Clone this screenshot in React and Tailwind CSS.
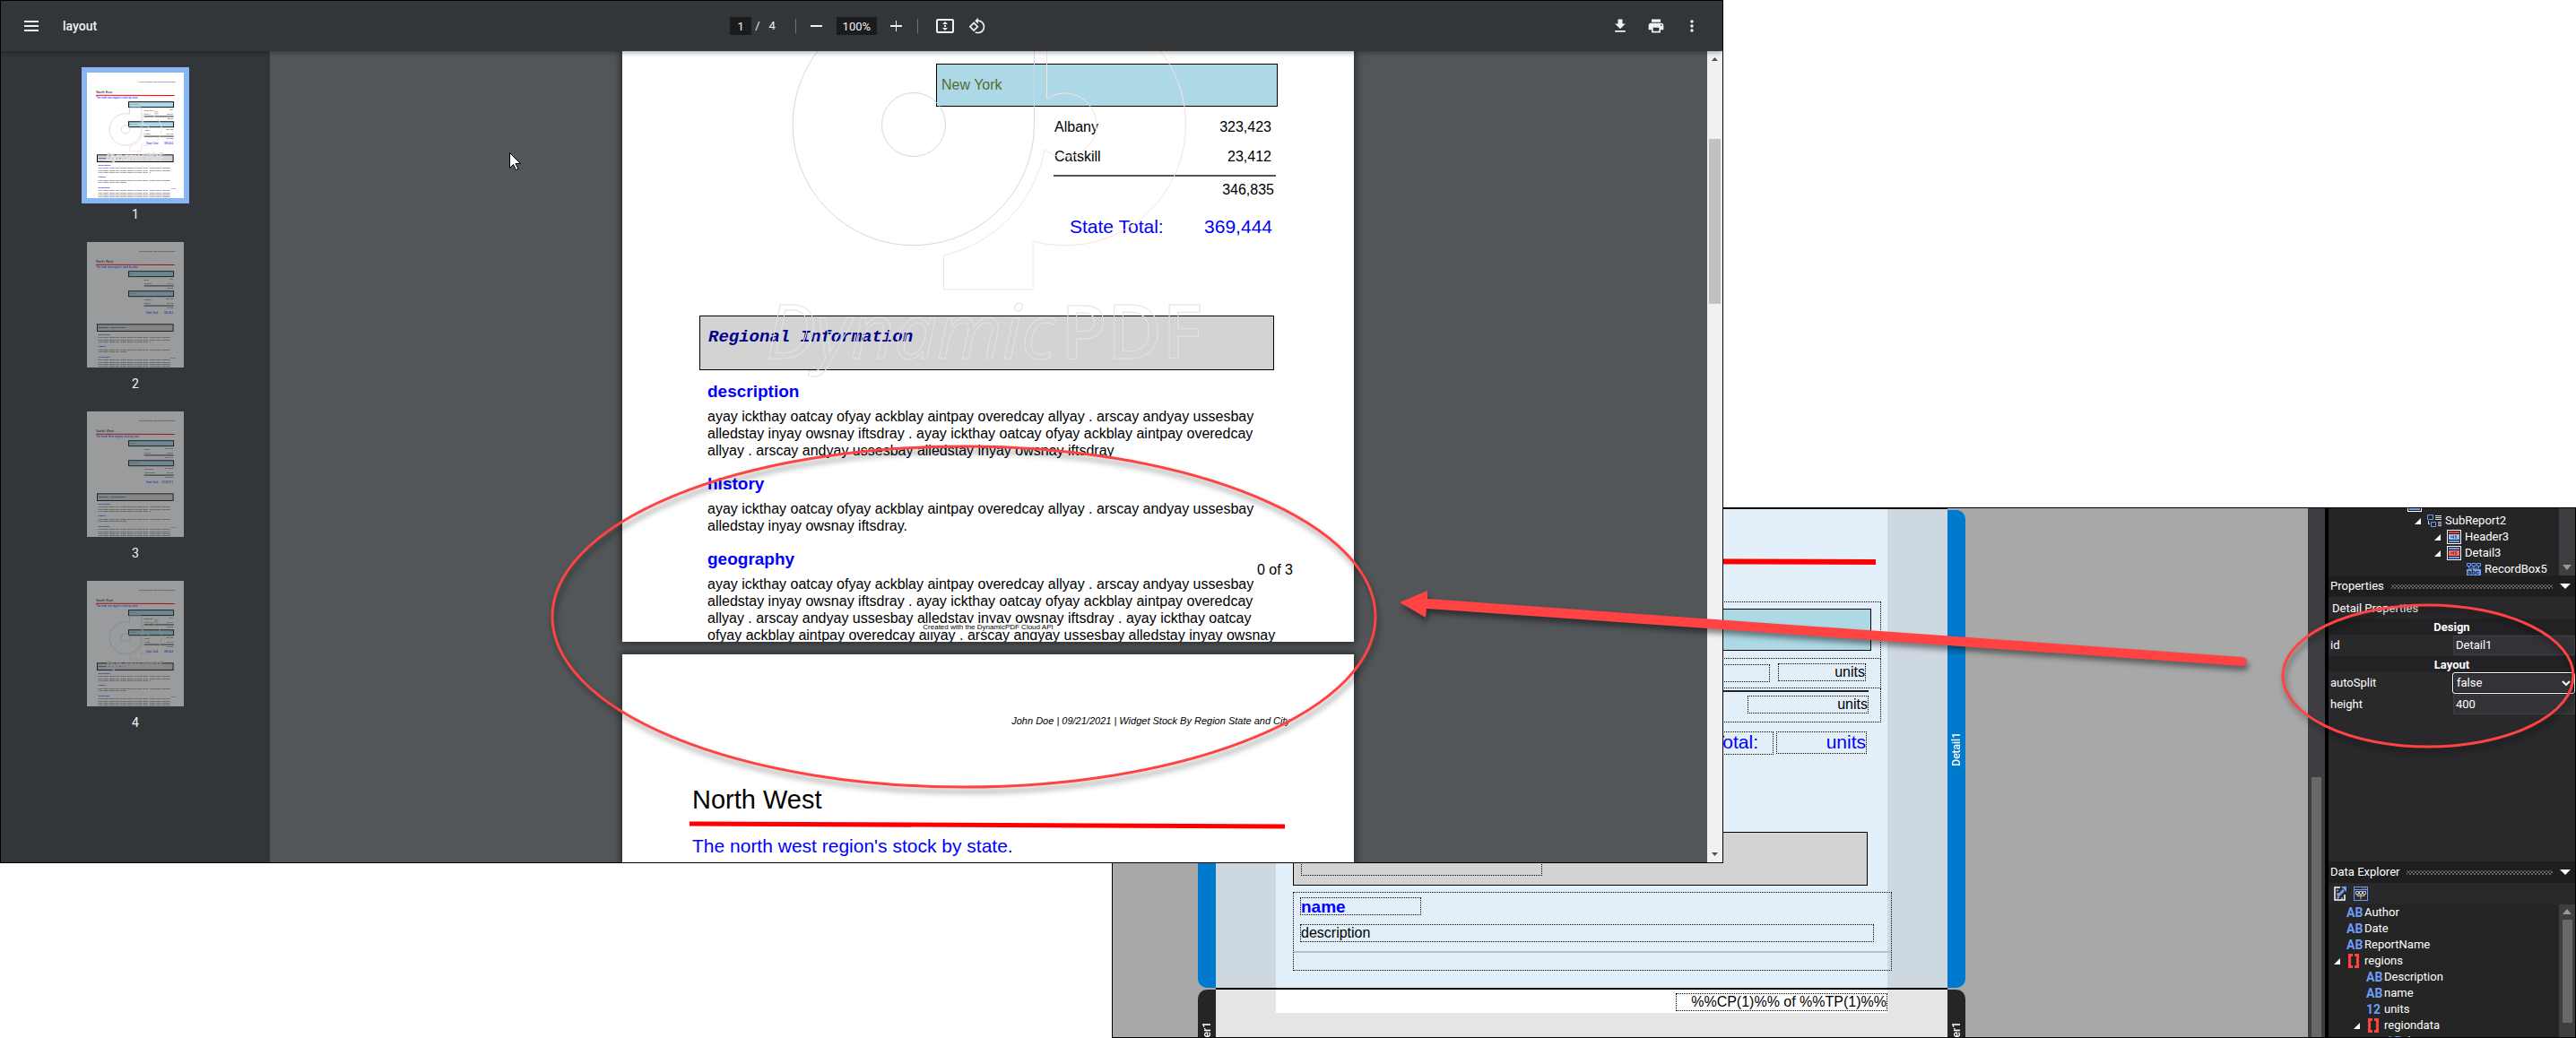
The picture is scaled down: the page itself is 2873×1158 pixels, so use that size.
import { useState } from 'react';

const SANS = "font-['Liberation_Sans',Arial,sans-serif]";
const ROBOTO = 'font-[Roboto,sans-serif]';
const MONO = "font-['Liberation_Mono',monospace]";

const LINE_A = 'ayay ickthay oatcay ofyay ackblay aintpay overedcay allyay . arscay andyay ussesbay';
const LINE_B = 'alledstay inyay owsnay iftsdray';
const SECTIONS = [
  {
    title: 'description',
    text: `${LINE_A} ${LINE_B} . ${LINE_A} ${LINE_B}`,
  },
  { title: 'history', text: `${LINE_A} ${LINE_B}.` },
  {
    title: 'geography',
    text: `${LINE_A} ${LINE_B} . ${LINE_A} ${LINE_B} . ${LINE_A} alledstay inyay owsnay`,
  },
];

const THUMBS = [
  {
    region: 'North East',
    note: "The north east region's stock by state.",
    mark: true,
    total: '369,444',
    states: [
      { name: 'New Jersey', rows: [['Toms River', '200'], ['Newark', '22,409']], sum: '22,609' },
      { name: 'New York', rows: [['Albany', '323,423'], ['Catskill', '23,412']], sum: '346,835' },
    ],
  },
  {
    region: 'North West',
    note: "The north west region's stock by state.",
    mark: false,
    total: '369,444',
    states: [
      { name: 'Idaho', rows: [['Boise', '200'], ['Pocatello', '22,409']], sum: '22,609' },
      { name: 'Oregon', rows: [['Portland', '323,423'], ['Eugene', '23,412']], sum: '346,835' },
    ],
  },
  {
    region: 'South West',
    note: "The South West region's stock by state.",
    mark: false,
    total: '3,519,371',
    states: [
      { name: 'Arizona', rows: [['Tempe', '2,134,123'], ['Phoenix', '52,621']], sum: '2,186,744' },
      { name: 'New Mexico', rows: [['Las Cruces', '1,234,212'], ['Albuquerque', '98,415']], sum: '1,332,627' },
    ],
  },
  {
    region: 'South East',
    note: "The north east region's stock by state.",
    mark: true,
    total: '369,444',
    states: [
      { name: 'Virginia', rows: [['Richmond', '200'], ['Lynchburg', '22,409']], sum: '22,609' },
      { name: 'Georgia', rows: [['Macon', '323,423'], ['Atlanta', '23,412']], sum: '346,835' },
    ],
  },
];

// DynamicPDF evaluation mark, in 816x1056 page units
function Watermark({ width = 1 }) {
  return (
    <g fill="none" strokeWidth={width}>
      <path d="M459.5 479V294H358.5V348.6A134.7 134.7 0 1 0 459.5 479Z" stroke="#cfd8ea" />
      <circle cx="325" cy="479" r="35.5" stroke="#cfd8ea" />
      <path
        d="M473.5 450V346A134.7 134.7 0 1 1 458 609V663H358.5V625A149 149 0 0 0 471 507A35.5 35.5 0 1 0 473.5 450Z"
        stroke="#fbe2d5"
      />
      <circle cx="584" cy="339" r="19" fill="#d9d9d9" />
      <g stroke="#e2e2e2" fontFamily="'Open Sans', sans-serif" fontSize="84">
        <text x="160" y="740" fontStyle="italic">Dynamic</text>
        <text x="489" y="740" fontWeight="600">PDF</text>
      </g>
    </g>
  );
}

function Thumbnail({ page }) {
  return (
    <svg viewBox="0 0 816 1056" className="block w-[108px] h-[140px] bg-white" fontFamily="'Liberation Sans', sans-serif" fontSize="16" aria-hidden="true">
      <text x="745" y="81" fontSize="11" fontStyle="italic" textAnchor="end">
        John Doe | 09/21/2021 | Widget Stock By Region State and City
      </text>
      <text x="78" y="172" fontSize="29">{page.region}</text>
      <path d="M75 190L738 192" stroke="#f00" strokeWidth="8" />
      <text x="78" y="221" fontSize="21" fill="#00f">{page.note}</text>
      {page.states.map((s, i) => (
        <g key={s.name} transform={i ? 'translate(0 167)' : undefined}>
          <rect x="351" y="246" width="379" height="45" fill="#add8e6" stroke="#000" strokeWidth="7" />
          <text x="356" y="274" fill="#556b2f">{s.name}</text>
          {s.rows.map(([city, units], r) => (
            <g key={city}>
              <text x="482" y={321 + r * 33}>{city}</text>
              <text x="724" y={319 + r * 33} textAnchor="end">{units}</text>
            </g>
          ))}
          <path d="M481 369H731" stroke="#555" strokeWidth="10" />
          <text x="726" y="390" textAnchor="end">{s.sum}</text>
        </g>
      ))}
      <text x="499" y="601" fontSize="21" fill="#00f">State Total:</text>
      <text x="725" y="601" fontSize="21" fill="#00f" textAnchor="end">{page.total}</text>
      <rect x="87" y="693" width="639" height="58" fill="#d3d3d3" stroke="#000" strokeWidth="7" />
      <text x="97" y="721" fontFamily="'Liberation Mono', monospace" fontSize="19" fontWeight="700" fontStyle="italic" fill="#00008b">
        Regional Information
      </text>
      <g fontSize="19" fontWeight="700" fill="#00f">
        <text x="95" y="783">description</text>
        <text x="95" y="886">history</text>
        <text x="95" y="971">geography</text>
      </g>
      {[810, 829, 847, 913, 932, 997, 1016, 1034, 1053].map((y, i) => (
        <text key={y} x="95" y={y}>
          {i === 2 || i === 4 ? LINE_A.slice(0, i === 2 ? 62 : 34) : LINE_A}
        </text>
      ))}
      <text x="748" y="981" textAnchor="end">0 of 3</text>
      {page.mark && <Watermark width={7} />}
    </svg>
  );
}

function Icon({ d, size = 20 }) {
  return (
    <svg width={size} height={size} viewBox="0 0 24 24" fill="#f1f1f1" aria-hidden="true">
      <path d={d} />
    </svg>
  );
}

const DOWNLOAD = 'M19 9h-4V3H9v6H5l7 7 7-7zM5 18v2h14v-2H5z';
const PRINT =
  'M19 8H5c-1.66 0-3 1.34-3 3v6h4v4h12v-4h4v-6c0-1.66-1.34-3-3-3zm-3 11H8v-5h8v5zm3-7c-.55 0-1-.45-1-1s.45-1 1-1 1 .45 1 1-.45 1-1 1zm-1-9H6v4h12V3z';
const MORE =
  'M12 8c1.1 0 2-.9 2-2s-.9-2-2-2-2 .9-2 2 .9 2 2 2zm0 2c-1.1 0-2 .9-2 2s.9 2 2 2 2-.9 2-2-.9-2-2-2zm0 6c-1.1 0-2 .9-2 2s.9 2 2 2 2-.9 2-2-.9-2-2-2z';
const ROTATE =
  'M7.34 6.41L.86 12.9l6.49 6.48 6.49-6.48-6.5-6.49zM3.69 12.9l3.66-3.66L11 12.9l-3.66 3.66-3.65-3.66zm15.67-6.26A8.95 8.95 0 0 0 13 4V.76L8.76 5 13 9.24V6c1.79 0 3.58.68 4.95 2.05a7.007 7.007 0 0 1 0 9.9 6.973 6.973 0 0 1-7.79 1.44l-1.49 1.49C10.02 21.62 11.51 22 13 22c2.3 0 4.61-.88 6.36-2.64a8.98 8.98 0 0 0 0-12.72z';

function Toolbar() {
  return (
    <header className={`relative z-10 grid grid-cols-[1fr_auto_1fr] items-center h-14 shrink-0 bg-[#323639] text-[#f1f1f1] shadow-[0_1px_6px_rgba(0,0,0,0.4)] ${ROBOTO}`}>
      <div className="flex items-center gap-[27px] pl-[26px]">
        <button type="button" aria-label="Menu">
          <svg width="16" height="12" fill="#f1f1f1" aria-hidden="true">
            <path d="M0 0h16v2H0zM0 5h16v2H0zM0 10h16v2H0z" />
          </svg>
        </button>
        <span className="text-sm font-medium">layout</span>
      </div>
      <div className="flex items-center pr-2 text-[13px]">
        <input aria-label="Page number" defaultValue="1" className="w-6 h-5 bg-[#191b1c] text-center" />
        <span className="pl-1">/</span>
        <span className="pl-[10px]">4</span>
        <span className="ml-[22px] mr-4 h-4 w-px bg-[#6f7274]" />
        <button type="button" aria-label="Zoom out" className="w-[14px]">
          <svg width="14" height="14" aria-hidden="true"><path d="M0 6h13v2H0z" fill="#f1f1f1" /></svg>
        </button>
        <input aria-label="Zoom level" defaultValue="100%" className="mx-[15px] w-[45px] h-5 bg-[#191b1c] text-center" />
        <button type="button" aria-label="Zoom in" className="w-[14px]">
          <svg width="14" height="14" aria-hidden="true"><path d="M0 6h6V1h1v5h6v2H7v5H6V8H0z" fill="#f1f1f1" /></svg>
        </button>
        <span className="mx-4 h-4 w-px bg-[#6f7274]" />
        <button type="button" aria-label="Fit to page" className="ml-1">
          <svg width="20" height="16" viewBox="0 0 20 16" fill="none" aria-hidden="true">
            <rect x="1" y="1" width="18" height="14" rx="1" stroke="#f1f1f1" strokeWidth="2" />
            <path d="M7 6l3-3 3 3zM7 10l3 3 3-3zM9 7h2v2H9z" fill="#f1f1f1" />
          </svg>
        </button>
        <button type="button" aria-label="Rotate" className="ml-4"><Icon d={ROTATE} /></button>
      </div>
      <div className="flex items-center justify-end gap-5 pr-6">
        <button type="button" aria-label="Download"><Icon d={DOWNLOAD} /></button>
        <button type="button" aria-label="Print"><Icon d={PRINT} /></button>
        <button type="button" aria-label="More"><Icon d={MORE} /></button>
      </div>
    </header>
  );
}

function Sidebar({ current, onPick }) {
  return (
    <nav className={`flex flex-col items-center gap-[29px] w-[300px] shrink-0 pt-[18px] bg-[#323639] ${ROBOTO}`}>
      {THUMBS.map((page, i) => (
        <button key={page.region} type="button" onClick={() => onPick(i)} className="flex flex-col items-center text-[#f1f1f1]">
          <span className={i === current ? 'p-[6px] bg-[#8ab4f8]' : 'p-[6px]'}>
            <span className={i === current ? 'block' : 'block opacity-50'}><Thumbnail page={page} /></span>
          </span>
          <span className="h-2 text-sm leading-6">{i + 1}</span>
        </button>
      ))}
    </nav>
  );
}

function ReportPages() {
  return (
    <main className={`flex-1 min-w-0 mr-px overflow-hidden text-black text-base ${SANS}`}>
      <article className="relative w-[816px] h-[659px] mx-auto pt-[14px] overflow-hidden bg-white shadow-[0_0_8px_2px_rgba(0,0,0,0.5)]">
        <h2 className="ml-[350px] w-[381px] h-12 pl-[5px] leading-[46px] border border-black bg-[#add8e6] text-[#556b2f]">New York</h2>
        <table className="mt-[6px] ml-[481px] w-[243px]">
          <tbody>
            <tr className="h-[33px]"><td className="pl-px">Albany</td><td className="text-right">323,423</td></tr>
            <tr className="h-[33px]"><td className="pl-px">Catskill</td><td className="text-right">23,412</td></tr>
          </tbody>
        </table>
        <p className="mt-1 ml-[481px] w-[248px] pt-[6px] pr-[2px] border-t-2 border-[#555] text-right leading-[18px]">346,835</p>
        <p className="flex justify-between mt-5 ml-[499px] w-[226px] text-[21px] leading-6 text-[#00f]">
          <span>State Total:</span>
          <span>369,444</span>
        </p>
        <h2 className={`mt-[87px] ml-[86px] w-[641px] h-[61px] pt-[11px] pl-[9px] border border-black bg-[#d3d3d3] text-[19px] leading-6 font-bold italic text-[#00008b] ${MONO}`}>
          Regional Information
        </h2>
        <div className="flex flex-col gap-[17px] mt-[13px] ml-[95px] w-[641px]">
          {SECTIONS.map((s) => (
            <section key={s.title}>
              <h3 className="text-[19px] leading-[22px] font-bold text-[#00f]">{s.title}</h3>
              <p className="mt-[7px] leading-[19px]">{s.text}</p>
            </section>
          ))}
        </div>
        <span className="absolute right-[68px] bottom-[71px] leading-[18px]">0 of 3</span>
        <span className="absolute bottom-[11px] left-1/2 -translate-x-1/2 whitespace-nowrap bg-white text-[8px] leading-[10px]">
          Created with the DynamicPDF Cloud API
        </span>
        <svg viewBox="0 397 816 659" className="absolute inset-0 w-full h-full" aria-hidden="true">
          <Watermark />
        </svg>
      </article>
      <article className="w-[816px] h-[1056px] mx-auto mt-[14px] pt-[68px] pl-[75px] bg-white shadow-[0_0_8px_2px_rgba(0,0,0,0.5)]">
        <p className="pr-[71px] text-right text-[11px] leading-3 italic">John Doe | 09/21/2021 | Widget Stock By Region State and City</p>
        <h1 className="mt-[65px] pl-[3px] text-[29px] leading-[34px]">North West</h1>
        <svg className="block mt-[6px]" width="664" height="12" aria-hidden="true">
          <path d="M0 4L664 7" stroke="#f00" strokeWidth="5" />
        </svg>
        <p className="mt-[5px] pl-[3px] text-[21px] leading-6 text-[#00f]">The north west region's stock by state.</p>
      </article>
    </main>
  );
}

function PdfViewer() {
  const [current, setCurrent] = useState(0);
  return (
    <section className="z-10 flex flex-col col-start-1 col-span-2 row-start-1 row-span-2 min-w-0 min-h-0 overflow-hidden border border-black bg-[#525659]">
      <Toolbar />
      <div className="flex flex-1 min-h-0">
        <Sidebar current={current} onPick={setCurrent} />
        <ReportPages />
        <div className="flex flex-col items-center justify-between w-[17px] shrink-0 py-[7px] bg-[#f1f1f1]">
          <svg width="7" height="4" className="mb-[87px]" aria-hidden="true"><path d="M0 4l3.5-4L7 4z" fill="#505050" /></svg>
          <span className="w-[13px] h-[184px] bg-[#c1c1c1]" />
          <span className="flex-1" />
          <svg width="7" height="4" aria-hidden="true"><path d="M0 0l3.5 4L7 0z" fill="#505050" /></svg>
        </div>
      </div>
    </section>
  );
}

function BandTab({ label, side, active, className }) {
  return (
    <div
      className={`flex items-center justify-center w-5 shrink-0 overflow-hidden text-white text-xs font-medium ${ROBOTO} ${active ? 'bg-[#007acc]' : 'bg-[#252526]'} ${side === 'left' ? 'rounded-l-[10px]' : 'rounded-r-[10px]'} ${className}`}
    >
      <span className="[writing-mode:vertical-rl] rotate-180">{label}</span>
    </div>
  );
}

const FIELD = 'border border-dotted border-black';

function DesignSurface() {
  return (
    <div className={`flex flex-col w-[856px] shrink-0 text-black text-base ${SANS}`}>
      <div className="flex h-[537px] shrink-0">
        <BandTab label="Detail1" side="left" active className="mt-[2px] mb-[2px]" />
        <div className="flex-1 min-w-0 px-[67px] border-t border-b-2 border-black bg-[#ced8e1]">
          <div className="flex flex-col h-full pt-[53px] bg-[#e3f0fa]">
            <svg className="ml-2 shrink-0" width="661" height="10" aria-hidden="true">
              <path d="M0 4L661 6" stroke="#f00" strokeWidth="6" />
            </svg>
            <div className="mt-10 ml-[273px] w-[402px] shrink-0">
              <div className={`h-16 pt-[7px] pl-[9px] ${FIELD}`}>
                <div className="w-[381px] h-[47px] border border-black bg-[#add8e6]" />
              </div>
              <div className={`flex justify-end gap-[9px] h-[33px] pt-[5px] pr-4 border-t-0 ${FIELD}`}>
                <div className={`w-[124px] h-5 mt-px ${FIELD}`} />
                <div className={`w-[98px] h-5 text-right leading-[18px] ${FIELD}`}>units</div>
              </div>
              <div className={`flex flex-col items-end h-[38px] pt-[2px] pr-[13px] border-t-0 ${FIELD}`}>
                <div className="w-[253px] h-[2px] bg-[#222]" />
                <div className={`mt-1 w-[135px] h-5 text-right leading-[18px] ${FIELD}`}>units</div>
              </div>
            </div>
            <div className="flex gap-[3px] mt-[10px] ml-[362px] shrink-0 text-[21px] leading-[22px] text-right text-[#00f]">
              <div className={`w-[193px] h-[26px] pr-4 ${FIELD}`}>State Total:</div>
              <div className={`w-[101px] h-[25px] ${FIELD}`}>units</div>
            </div>
            <div className="mt-[86px] ml-[19px] w-[641px] h-[60px] shrink-0 pt-[10px] pl-2 border border-black bg-[#d3d3d3]">
              <div className={`w-[269px] h-[38px] text-[19px] leading-6 font-bold italic text-[#00008b] ${FIELD} ${MONO}`}>Regional Information</div>
            </div>
            <div className={`mt-[7px] ml-[19px] w-[668px] h-[88px] shrink-0 ${FIELD}`}>
              <div className="h-[67px] pt-[5px] pl-[7px] border-b-2 border-[#b6c1c8]">
                <div className={`w-[135px] h-5 text-[19px] leading-[19px] font-bold text-[#00f] ${FIELD}`}>name</div>
                <div className={`mt-[10px] w-[640px] h-5 leading-[18px] ${FIELD}`}>description</div>
              </div>
            </div>
          </div>
        </div>
        <BandTab label="Detail1" side="right" active className="mt-[2px] mb-[2px]" />
      </div>
      <div className="flex flex-1 min-h-0 overflow-hidden">
        <BandTab label="Footer1" side="left" className="h-[114px]" />
        <div className="flex-1 min-w-0 px-[67px] bg-[#e5e5e5]">
          <div className="flex justify-end h-[26px] pt-1 bg-white">
            <div className={`w-[236px] h-5 text-right leading-[18px] ${FIELD}`}>%%CP(1)%% of %%TP(1)%%</div>
          </div>
        </div>
        <BandTab label="Footer1" side="right" className="h-[114px]" />
      </div>
    </div>
  );
}

function Caret() {
  return (
    <svg width="7" height="7" className="mr-[7px] mt-px" aria-hidden="true">
      <path d="M7 0v7H0z" fill="#fff" />
    </svg>
  );
}

function BandIcon({ top, middle }) {
  return (
    <svg width="16" height="16" className="mr-1" aria-hidden="true">
      <rect x=".5" y=".5" width="15" height="15" fill="#222" stroke="#fff" />
      <path d="M2 2h12v2H2z" fill={top} />
      <path d="M2 5h12v6H2z" fill={middle} />
      <path d="M5 7v2M8 7h-1v2h1M10 6v4" stroke="#333" fill="none" />
      <path d="M2 12h12v2H2z" fill="#6c9cf5" />
    </svg>
  );
}

function SubReportIcon() {
  return (
    <svg width="16" height="16" className="mr-1" fill="none" aria-hidden="true">
      <path d="M.5 1.5h6v5h-6zM4.5 9.5h5v5h-5z" stroke="#6c9cf5" />
      <path d="M9 2.5h7M9 4.5h7M9 6.5h7M12 9.5h4M12 11.5h4M12 13.5h4M1.5 8v3.500H3" stroke="#ddd" />
    </svg>
  );
}

function RecordBoxIcon() {
  return (
    <svg width="16" height="16" className="mr-1" fill="none" aria-hidden="true">
      <path d="M.5 1.5h4v3h-4zM6 1.5h4v3H6zM11.5 1.5h4v3h-4zM2.5 5v2h11V5M8 5v3" stroke="#6c9cf5" />
      <path d="M0 8h16v8H0z" fill="#6c9cf5" />
      <text x="1" y="14" fill="#222" fontSize="8" fontWeight="700" fontFamily="Roboto, sans-serif">abc</text>
    </svg>
  );
}

function TypeIcon({ kind }) {
  if (kind === '[]') {
    return (
      <svg width="12" height="16" className="ml-[2px] mr-[6px]" aria-hidden="true">
        <path d="M5 1.5H1.5v13H5M7 1.5h3.5v13H7" fill="none" stroke="#f44" strokeWidth="3" />
      </svg>
    );
  }
  return <span className="w-5 text-sm leading-[18px] font-bold text-[#6c9cf5]">{kind}</span>;
}

const DATA_ROWS = [
  { kind: 'AB', name: 'Author', pad: 'pl-5' },
  { kind: 'AB', name: 'Date', pad: 'pl-5' },
  { kind: 'AB', name: 'ReportName', pad: 'pl-5' },
  { kind: '[]', name: 'regions', pad: 'pl-[6px]', open: true },
  { kind: 'AB', name: 'Description', pad: 'pl-[42px]' },
  { kind: 'AB', name: 'name', pad: 'pl-[42px]' },
  { kind: '12', name: 'units', pad: 'pl-[42px]' },
  { kind: '[]', name: 'regiondata', pad: 'pl-7', open: true },
  { kind: 'AB', name: 'description', pad: 'pl-16' },
];

function PanelHeader({ children }) {
  return (
    <h2 className="flex items-center gap-2 h-6 shrink-0 pl-[2px] pr-[5px] bg-[#1e1e1e]">
      {children}
      <span className="flex-1 h-[5px] bg-[radial-gradient(#666_35%,transparent_36%),radial-gradient(#666_35%,transparent_36%)] bg-[length:4px_4px] bg-[position:0_0,2px_2px]" />
      <svg width="12" height="6" aria-hidden="true"><path d="M0 0h12L6 6z" fill="#fff" /></svg>
    </h2>
  );
}

const ROW_INPUT = 'h-[22px] w-[136px] px-[2px] pb-px bg-[#333337] border border-[#3f3f46]';

function Panels() {
  const [props, setProps] = useState({ id: 'Detail1', autoSplit: 'false', height: '400' });
  const set = (key) => (e) => setProps({ ...props, [key]: e.target.value });

  return (
    <aside className={`flex flex-col w-[275px] shrink-0 overflow-hidden bg-[#29292b] text-white text-[13px] leading-[18px] ${ROBOTO}`}>
      <div className="flex h-[75px] shrink-0 bg-[#252526]">
        <ul className="flex-1">
          <li className="h-[5px] overflow-hidden pl-[88px]">
            <svg width="16" height="4" aria-hidden="true">
              <path d="M0 0h16v4H0z" fill="#fff" />
              <path d="M1 0h14v3H1z" fill="#222" />
              <path d="M2 0h12v2H2z" fill="#6c9cf5" />
            </svg>
          </li>
          <li className="flex items-center h-[18px] pl-24"><Caret /><SubReportIcon />SubReport2</li>
          <li className="flex items-center h-[18px] pl-[118px]"><Caret /><BandIcon top="#f33" middle="#9cbcf8" />Header3</li>
          <li className="flex items-center h-[18px] pl-[118px]"><Caret /><BandIcon top="#6c9cf5" middle="#f66" />Detail3</li>
          <li className="flex items-center h-[18px] pl-[154px]"><RecordBoxIcon />RecordBox5</li>
        </ul>
        <div className="flex items-end justify-center w-[18px] pb-[6px] bg-[#3e3e42]">
          <svg width="10" height="6" aria-hidden="true"><path d="M0 0h10L5 6z" fill="#999" /></svg>
        </div>
      </div>
      <PanelHeader>Properties</PanelHeader>
      <div className="flex-1 min-h-0">
        <h3 className="h-6 pl-1 leading-[26px]">Detail Properties</h3>
        <h4 className="h-[18px] text-center font-bold leading-5 bg-[#222224]">Design</h4>
        <div className="flex items-center justify-between h-6 pl-[2px]">
          <label htmlFor="prop-id">id</label>
          <input id="prop-id" value={props.id} onChange={set('id')} className={ROW_INPUT} />
        </div>
        <h4 className="h-[18px] text-center font-bold leading-5 bg-[#222224]">Layout</h4>
        <div className="flex items-center justify-between h-6 pl-[2px]">
          <label htmlFor="prop-split">autoSplit</label>
          <div className="relative">
            <select
              id="prop-split"
              value={props.autoSplit}
              onChange={set('autoSplit')}
              className="block w-[137px] h-6 pl-1 pb-px appearance-none rounded-[3px] border border-white bg-[#333337] shadow-[inset_0_0_0_1px_#111]"
            >
              <option>false</option>
              <option>true</option>
            </select>
            <svg width="10" height="6" className="absolute right-[5px] top-[9px]" aria-hidden="true">
              <path d="M1 1l4 4 4-4" fill="none" stroke="#fff" strokeWidth="2" />
            </svg>
          </div>
        </div>
        <div className="flex items-center justify-between h-6 pl-[2px]">
          <label htmlFor="prop-height">height</label>
          <input id="prop-height" value={props.height} onChange={set('height')} className={ROW_INPUT} />
        </div>
      </div>
      <PanelHeader>Data Explorer</PanelHeader>
      <div className="flex items-center gap-2 h-6 shrink-0 pl-[6px]">
        <button type="button" aria-label="Edit data">
          <svg width="14" height="16" fill="none" aria-hidden="true">
            <path d="M7 1H1v14h11V9" stroke="#fff" strokeWidth="1.5" />
            <path d="M3 5l2-1M3 8h3M3 13l3-1M8 13h2" stroke="#aaa" strokeWidth="1.5" />
            <path d="M4 11l7-7" stroke="#6c9cf5" strokeWidth="3" />
            <path d="M8 0h6v6z" fill="#6c9cf5" />
          </svg>
        </button>
        <button type="button" aria-label="Browse data">
          <svg width="16" height="16" fill="none" aria-hidden="true">
            <rect x=".5" y=".5" width="15" height="15" stroke="#6c9cf5" />
            <path d="M1 3.5h14" stroke="#6c9cf5" />
            <path d="M9 2h1M11 2h1M13 2h1" stroke="#6c9cf5" />
            <path d="M2.5 5.5h3v3h-3zM6.5 5.5h3v3h-3zM10.5 5.5h3v3h-3zM4 9v1.5h8V9M8 9v5" stroke="#ccc" />
          </svg>
        </button>
      </div>
      <div className="flex h-[148px] shrink-0 bg-[#252526]">
        <ul className="flex-1 overflow-hidden">
          {DATA_ROWS.map((row) => (
            <li key={row.name} className={`flex items-center h-[18px] ${row.pad}`}>
              {row.open && <Caret />}
              <TypeIcon kind={row.kind} />
              {row.name}
            </li>
          ))}
        </ul>
        <div className="flex flex-col items-center gap-[6px] w-[18px] pt-[5px] bg-[#3e3e42]">
          <svg width="10" height="6" aria-hidden="true"><path d="M0 6h10L5 0z" fill="#999" /></svg>
          <span className="w-[11px] h-[115px] bg-[#686868]" />
        </div>
      </div>
    </aside>
  );
}

function Designer() {
  return (
    <section className="flex col-start-2 col-span-2 row-start-2 row-span-2 min-w-0 min-h-0 overflow-hidden border border-black bg-[#a8a8a8]">
      <div className="w-[95px] shrink-0" />
      <DesignSurface />
      <div className="flex-1" />
      <div className="flex flex-col items-center justify-end w-[19px] shrink-0 bg-[#3e3e42]">
        <span className="w-[11px] h-[290px] bg-[#686868]" />
      </div>
      <div className="w-1 shrink-0 bg-black" />
      <Panels />
    </section>
  );
}

// Callouts and the pointer float over both windows
function Annotations() {
  return (
    <svg
      viewBox="0 0 2873 1158"
      preserveAspectRatio="none"
      className="absolute inset-0 z-20 w-full h-full pointer-events-none"
      aria-hidden="true"
    >
      <g className="drop-shadow-[2px_5px_3px_rgba(0,0,0,0.45)]">
        <ellipse cx="1075" cy="688" rx="459" ry="190" fill="none" stroke="#ff4343" strokeWidth="3" />
        <ellipse cx="2708" cy="754" rx="162" ry="79" fill="none" stroke="#ff4343" strokeWidth="3" />
        <path d="M1561 672L1592 659V668L2501 733Q2506 734 2506 738Q2505 743 2500 743L1591 679L1590 689Z" fill="#ff4343" />
      </g>
      <path d="M568.5 170.5v17l4-4 3 6 2.500-1-3-6h5.500z" fill="#fff" stroke="#000" />
    </svg>
  );
}

export default function App() {
  return (
    <div className="relative grid h-screen overflow-hidden bg-white grid-cols-[1240fr_682fr_951fr] grid-rows-[566fr_397fr_195fr]">
      <Designer />
      <PdfViewer />
      <Annotations />
    </div>
  );
}
